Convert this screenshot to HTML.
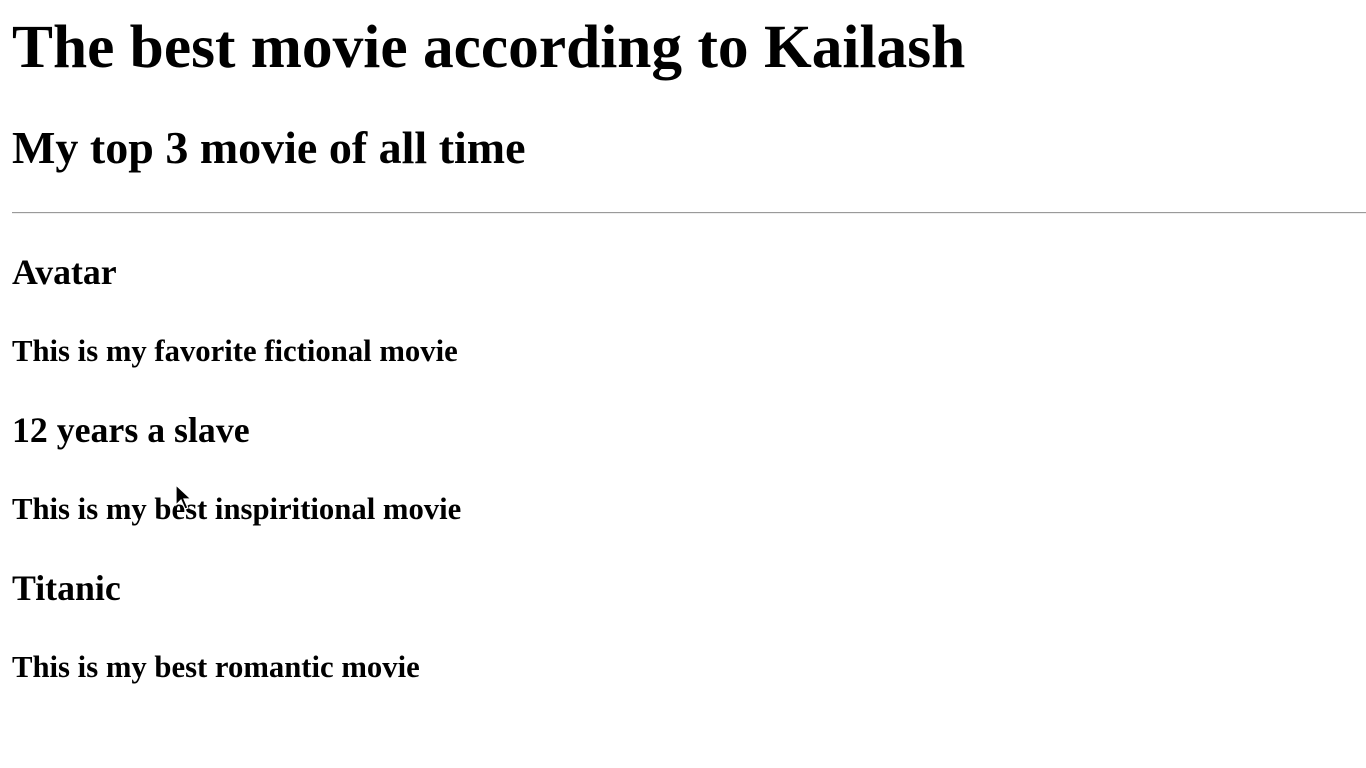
<!DOCTYPE html>
<html><head><meta charset="utf-8"><style>
html,body{margin:0;padding:0;background:#fff;width:1366px;height:768px;overflow:hidden;position:relative}
.t{position:absolute;left:12px;margin:0;font-family:"Liberation Serif",serif;font-weight:bold;color:#000;line-height:1;white-space:nowrap}
h1.t{font-size:61.4px;top:16.6px}
h2.t{font-size:46px;top:124.5px}
h3.t{font-size:35.8px}
h4.t{font-size:30.7px}
hr{position:absolute;left:12px;top:212px;width:1354px;margin:0;border:0;border-top:1px solid #9a9a9a;border-bottom:1px solid #eee;height:0}
</style></head><body>
<h1 class="t">The best movie according to Kailash</h1>
<h2 class="t">My top 3 movie of all time</h2>
<hr>
<h3 class="t" style="top:255px">Avatar</h3>
<h4 class="t" style="top:336.3px">This is my favorite fictional movie</h4>
<h3 class="t" style="top:413px">12 years a slave</h3>
<h4 class="t" style="top:494.3px">This is my best inspiritional movie</h4>
<h3 class="t" style="top:571px">Titanic</h3>
<h4 class="t" style="top:652.3px">This is my best romantic movie</h4>
<svg style="position:absolute;left:175px;top:484px" width="20" height="28" viewBox="0 0 20 28"><path d="M1 1 L1 21 L6 16 L10 25 L13 24 L9 15 L16 15 Z" fill="#000" stroke="#fff" stroke-width="1.2"/></svg>
</body></html>
